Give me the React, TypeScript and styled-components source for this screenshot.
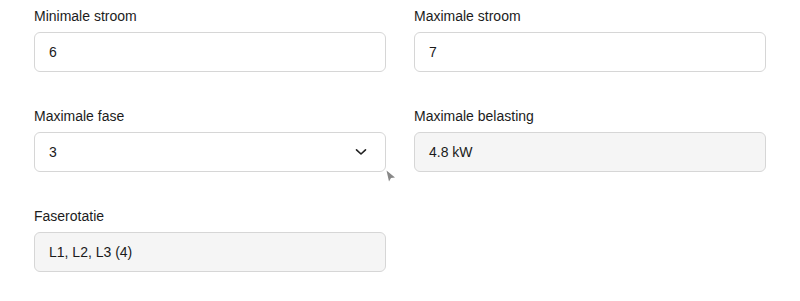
import React from "react";
import styled, { createGlobalStyle } from "styled-components";

const GlobalStyle = createGlobalStyle`
  html, body {
    margin: 0;
    padding: 0;
    background: #ffffff;
  }
  body {
    font-family: "Liberation Sans", Arial, sans-serif;
    color: #1f1f1f;
  }
`;

const Page = styled.div`
  width: 800px;
  height: 301px;
  box-sizing: border-box;
  padding: 8px 34px 0;
  display: grid;
  grid-template-columns: 1fr 1fr;
  column-gap: 28px;
  row-gap: 36px;
  align-content: start;
  overflow: hidden;
`;

const Field = styled.div`
  display: flex;
  flex-direction: column;
  position: relative;
`;

const Label = styled.label`
  font-size: 14px;
  line-height: 17px;
  color: #1c1c1c;
  margin-bottom: 7px;
`;

const Box = styled.div<{ $readOnly?: boolean }>`
  height: 40px;
  box-sizing: border-box;
  border: 1px solid #d6d6d6;
  border-radius: 6px;
  background: ${(p) => (p.$readOnly ? "#f5f5f5" : "#ffffff")};
  padding: 0 14px;
  display: flex;
  align-items: center;
  justify-content: space-between;
  font-size: 14px;
  color: #1a1a1a;
`;

const Chevron = styled.svg`
  width: 12px;
  height: 8px;
  margin-right: 4px;
`;

const Cursor = styled.svg`
  position: absolute;
  right: -10px;
  bottom: -10px;
  width: 10px;
  height: 12px;
`;

const App: React.FC = () => {
  return (
    <>
      <GlobalStyle />
      <Page>
        <Field>
          <Label>Minimale stroom</Label>
          <Box>6</Box>
        </Field>
        <Field>
          <Label>Maximale stroom</Label>
          <Box>7</Box>
        </Field>
        <Field>
          <Label>Maximale fase</Label>
          <Box>
            3
            <Chevron viewBox="0 0 12 8">
              <path d="M1.5 1.8 L6 6 L10.5 1.8" fill="none" stroke="#222" strokeWidth="1.6" strokeLinecap="round" strokeLinejoin="round" />
            </Chevron>
          </Box>
          <Cursor viewBox="0 0 10 12">
            <path d="M0.5 0.5 L9 7.5 L5 8 L3 11.5 Z" fill="#888" />
          </Cursor>
        </Field>
        <Field>
          <Label>Maximale belasting</Label>
          <Box $readOnly>4.8 kW</Box>
        </Field>
        <Field>
          <Label>Faserotatie</Label>
          <Box $readOnly>L1, L2, L3 (4)</Box>
        </Field>
      </Page>
    </>
  );
};

export default App;
